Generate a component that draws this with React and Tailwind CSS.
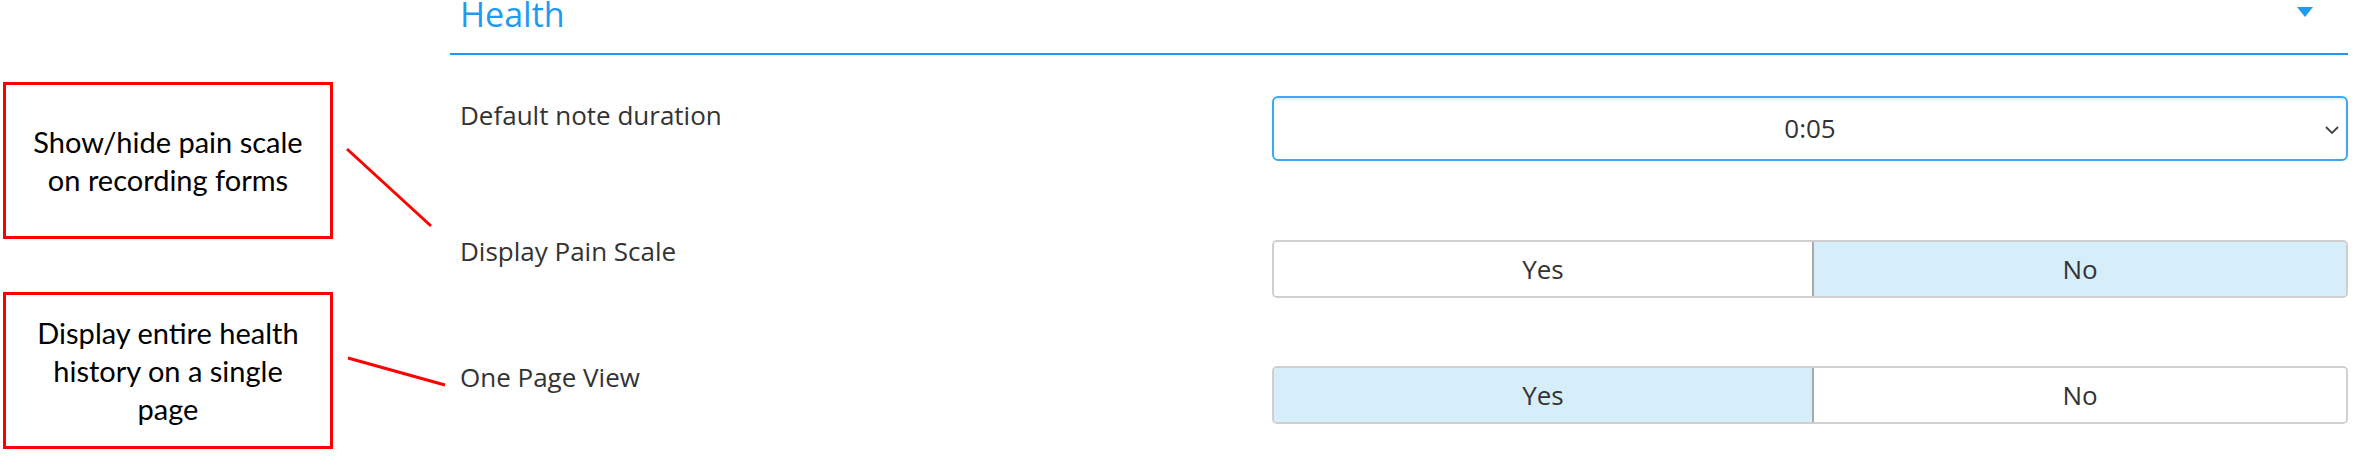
import React from "react";

const Note = ({ lines }) => (
  <div className="w-[330px] h-[157px] border-[3px] border-[#ff0000] flex flex-col items-center justify-center text-center font-['Lato',sans-serif] text-[29px] leading-[38px] text-black">
    {lines.map((l) => (
      <span key={l}>{l}</span>
    ))}
  </div>
);

const Toggle = ({ yes }) => (
  <div className="flex h-[58px] w-[1076px] rounded-[5px] border-2 border-[#cfcfcf] overflow-hidden text-[26px] text-[#333]">
    <div className={yes ? "w-[538px] flex items-center justify-center bg-[#d6eefa]" : "w-[538px] flex items-center justify-center bg-white"}>Yes</div>
    <div className="w-[2px] bg-[#a9a9a9]" />
    <div className={yes ? "flex-1 flex items-center justify-center bg-white" : "flex-1 flex items-center justify-center bg-[#d6eefa]"}>No</div>
  </div>
);

const App = () => {
  return (
    <div className="relative w-[2374px] h-[474px] bg-white overflow-hidden flex">
      <aside className="w-[450px] shrink-0 pl-[3px] pt-[82px] flex flex-col gap-[53px]">
        <Note lines={["Show/hide pain scale", "on recording forms"]} />
        <Note lines={["Display entire health", "history on a single", "page"]} />
      </aside>

      <main className="w-[1898px] shrink-0 font-['Open_Sans',sans-serif] text-[#333]">
        <div className="h-[55px] border-b-2 border-[#2196f3] flex justify-between items-start pl-[10px] pr-[35px]">
          <h2 className="text-[34px] leading-[34px] -mt-[3px] text-[#1e9bf0]">Health</h2>
          <svg width="16" height="10" viewBox="0 0 16 10" className="mt-[7px]">
            <polygon points="0,0 16,0 8,10" fill="#1e9bf0" />
          </svg>
        </div>

        <div className="flex items-start mt-[41px]">
          <div className="w-[822px] pl-[10px] mt-[3px] text-[26px] leading-[32px]">Default note duration</div>
          <div className="relative w-[1076px] h-[65px] rounded-[6px] border-2 border-[#3ea8f5] shadow-[inset_0_2px_3px_rgba(0,0,0,0.08)] flex items-center justify-center text-[26px]">
            <span>0:05</span>
            <svg width="14" height="8" viewBox="0 0 14 8" className="absolute right-[7px] top-[28px]">
              <polyline points="1,1 7,7 13,1" fill="none" stroke="#444" strokeWidth="1.8" />
            </svg>
          </div>
        </div>

        <div className="flex items-start mt-[79px]">
          <div className="w-[822px] pl-[10px] -mt-[5px] text-[26px] leading-[32px]">Display Pain Scale</div>
          <Toggle yes={false} />
        </div>

        <div className="flex items-start mt-[68px]">
          <div className="w-[822px] pl-[10px] -mt-[5px] text-[26px] leading-[32px]">One Page View</div>
          <Toggle yes={true} />
        </div>
      </main>

      <svg className="absolute inset-0 pointer-events-none" width="2374" height="474">
        <line x1="347" y1="149" x2="431" y2="226" stroke="#ff0000" strokeWidth="3" />
        <line x1="348" y1="358" x2="445" y2="385" stroke="#ff0000" strokeWidth="3" />
      </svg>
    </div>
  );
};

export default App;
